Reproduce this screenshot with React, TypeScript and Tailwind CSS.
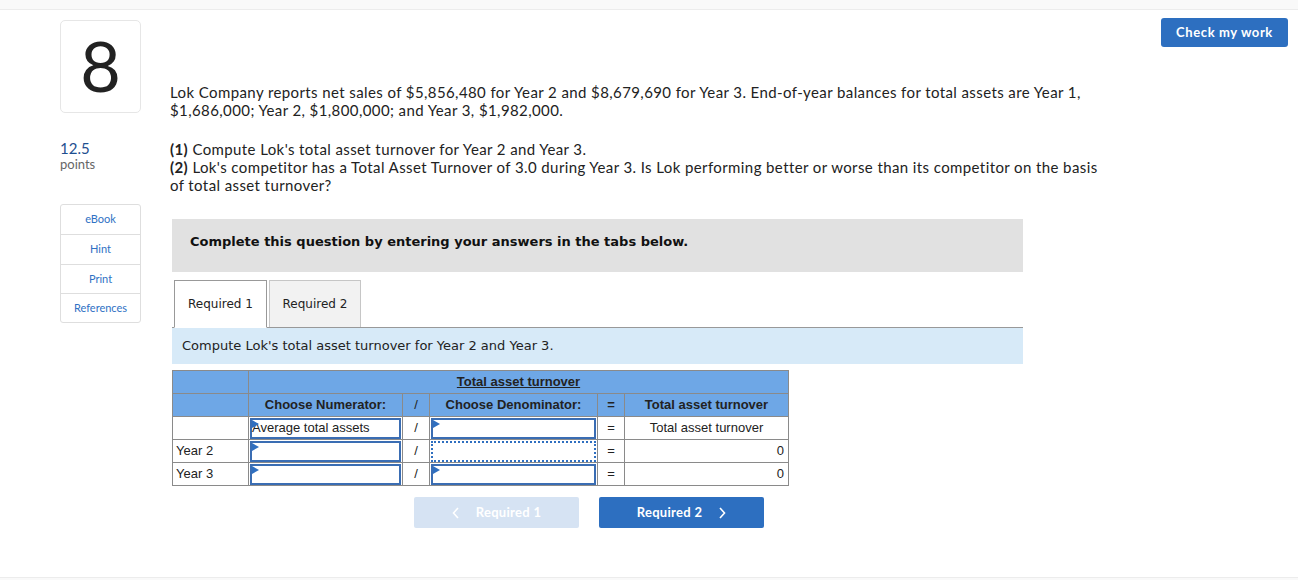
import React from "react";

const proxima = { fontFamily: "Lato, 'Open Sans', sans-serif" };
const verdana = { fontFamily: "'DejaVu Sans', Verdana, sans-serif" };
const arial = { fontFamily: "'Liberation Sans', Arial, sans-serif" };

function Flag() {
  return (
    <svg className="absolute left-0 top-0" width="7" height="8" viewBox="0 0 7 8">
      <path d="M0 0 L7 4 L0 8 Z" fill="#2f6fc0" />
    </svg>
  );
}

function InputCell({ text, dotted, flag = true }: { text?: string; dotted?: boolean; flag?: boolean }) {
  return (
    <td className="border border-[#8a8a8a] p-0">
      <div
        className={
          "relative h-[21px] mx-[1px] flex items-center text-[13px] text-[#222] " +
          (dotted ? "border-2 border-dotted border-[#2f6fc0]" : "border-2 border-[#3a6db3]")
        }
      >
        {flag && <Flag />}
        {text}
      </div>
    </td>
  );
}

export default function App() {
  return (
    <div className="w-[1298px] h-[580px] bg-white relative overflow-hidden flex flex-col" style={proxima}>
      <div className="h-[10px] bg-[#f9f9f9] border-b border-[#ececec] shrink-0" />
      <div className="flex flex-1">
        {/* Left column */}
        <div className="ml-[60px] w-[81px] shrink-0 flex flex-col">
          <div className="mt-[10px] h-[93px] w-[81px] border border-[#e6e6e6] rounded-[5px] flex items-center justify-center">
            <span className="text-[70px] leading-none text-[#222] font-normal -mt-[4px]">8</span>
          </div>
          <div className="mt-[26px] text-[15px] leading-[18px] text-[#1e4f90]">12.5</div>
          <div className="text-[13px] leading-[15px] text-[#666]">points</div>
          <div className="mt-[32px] border border-[#dedede] rounded-[3px] flex flex-col text-[11px] text-[#2f71c4]">
            <div className="h-[30px] flex items-center justify-center border-b border-[#dedede]">eBook</div>
            <div className="h-[30px] flex items-center justify-center border-b border-[#dedede]">Hint</div>
            <div className="h-[29px] flex items-center justify-center border-b border-[#dedede]">Print</div>
            <div className="h-[28px] flex items-center justify-center">References</div>
          </div>
        </div>

        {/* Main column */}
        <div className="ml-[29px] w-[853px] shrink-0 flex flex-col">
          <p className="mt-[73px] text-[15px] leading-[18px] tracking-[0.4px] text-[#222] whitespace-nowrap">
            Lok Company reports net sales of $5,856,480 for Year 2 and $8,679,690 for Year 3. End-of-year balances for total assets are Year 1,
            <br />
            $1,686,000; Year 2, $1,800,000; and Year 3, $1,982,000.
          </p>
          <p className="mt-[21px] text-[15px] leading-[18px] tracking-[0.4px] text-[#222] whitespace-nowrap">
            <b>(1)</b> Compute Lok's total asset turnover for Year 2 and Year 3.
            <br />
            <b>(2)</b> Lok's competitor has a Total Asset Turnover of 3.0 during Year 3. Is Lok performing better or worse than its competitor on the basis
            <br />
            of total asset turnover?
          </p>

          <div className="ml-[2px] w-[851px] mt-[25px] h-[53px] bg-[#e1e1e1] flex items-start pt-[15px] pl-[18px]" style={verdana}>
            <span className="text-[13px] leading-[16px] font-bold text-[#111]">Complete this question by entering your answers in the tabs below.</span>
          </div>

          {/* Tabs */}
          <div className="ml-[2px] w-[851px] mt-[8px] flex items-end border-b border-[#999] h-[48px]" style={verdana}>
            <div className="ml-[2px] w-[93px] h-[48px] -mb-[1px] bg-white border border-[#999] border-b-white flex items-center justify-center text-[12px] text-[#222]">
              Required 1
            </div>
            <div className="ml-[2px] w-[92px] h-[47px] bg-[#f2f2f2] border border-[#c6c6c6] border-b-0 flex items-center justify-center text-[12px] text-[#222]">
              Required 2
            </div>
          </div>
          <div className="ml-[2px] w-[851px] h-[36px] bg-[#d7eaf8] flex items-center pl-[10px]" style={verdana}>
            <span className="text-[13px] text-[#222]">Compute Lok's total asset turnover for Year 2 and Year 3.</span>
          </div>

          {/* Table */}
          <table className="ml-[2px] mt-[6px] w-[616px] border-collapse text-[13px] text-[#222] table-fixed" style={arial}>
            <colgroup>
              <col style={{ width: 76 }} />
              <col style={{ width: 154 }} />
              <col style={{ width: 27 }} />
              <col style={{ width: 168 }} />
              <col style={{ width: 27 }} />
              <col style={{ width: 164 }} />
            </colgroup>
            <tbody>
              <tr className="h-[23px] bg-[#6ea7e6]">
                <td className="border border-[#8a8a8a] p-0" />
                <td colSpan={5} className="border border-[#8a8a8a] p-0 text-center font-bold underline">
                  Total asset turnover
                </td>
              </tr>
              <tr className="h-[23px] bg-[#6ea7e6] font-bold">
                <td className="border border-[#8a8a8a] p-0" />
                <td className="border border-[#8a8a8a] p-0 text-center">Choose Numerator:</td>
                <td className="border border-[#8a8a8a] p-0 text-center font-normal">/</td>
                <td className="border border-[#8a8a8a] p-0 text-center">Choose Denominator:</td>
                <td className="border border-[#8a8a8a] p-0 text-center">=</td>
                <td className="border border-[#8a8a8a] p-0 text-center">Total asset turnover</td>
              </tr>
              <tr className="h-[23px]">
                <td className="border border-[#8a8a8a] p-0" />
                <InputCell text="Average total assets" />
                <td className="border border-[#8a8a8a] p-0 text-center">/</td>
                <InputCell />
                <td className="border border-[#8a8a8a] p-0 text-center">=</td>
                <td className="border border-[#8a8a8a] p-0 text-center">Total asset turnover</td>
              </tr>
              <tr className="h-[23px]">
                <td className="border border-[#8a8a8a] p-0 pl-[3px]">Year 2</td>
                <InputCell />
                <td className="border border-[#8a8a8a] p-0 text-center">/</td>
                <InputCell dotted flag={false} />
                <td className="border border-[#8a8a8a] p-0 text-center">=</td>
                <td className="border border-[#8a8a8a] p-0 text-right pr-[4px]">0</td>
              </tr>
              <tr className="h-[23px]">
                <td className="border border-[#8a8a8a] p-0 pl-[3px]">Year 3</td>
                <InputCell />
                <td className="border border-[#8a8a8a] p-0 text-center">/</td>
                <InputCell />
                <td className="border border-[#8a8a8a] p-0 text-center">=</td>
                <td className="border border-[#8a8a8a] p-0 text-right pr-[4px]">0</td>
              </tr>
            </tbody>
          </table>

          {/* Nav buttons */}
          <div className="ml-[244px] mt-[11px] flex gap-[20px]">
            <div className="w-[165px] h-[31px] rounded-[2px] bg-[#d6e3f3] flex items-center justify-center gap-[16px] text-white font-bold text-[13px] tracking-[0.3px]">
              <svg width="8" height="12" viewBox="0 0 8 12"><path d="M6 1 L1.5 6 L6 11" stroke="white" strokeWidth="1.6" fill="none" /></svg>
              <span>Required 1</span>
            </div>
            <div className="w-[165px] h-[31px] rounded-[2px] bg-[#2d6fc0] flex items-center justify-center gap-[16px] text-white font-bold text-[13px] tracking-[0.3px]">
              <span>Required 2</span>
              <svg width="8" height="12" viewBox="0 0 8 12"><path d="M2 1 L6.5 6 L2 11" stroke="white" strokeWidth="1.6" fill="none" /></svg>
            </div>
          </div>
        </div>

        <div className="ml-auto mr-[10px] mt-[8px]">
          <div className="w-[127px] h-[29px] rounded-[3px] bg-[#2d6fc0] flex items-center justify-center text-white font-bold text-[13px] tracking-[0.6px]">
            Check my work
          </div>
        </div>
      </div>
      <div className="h-[3px] bg-[#f9f9f9] border-t border-[#ececec] shrink-0" />
    </div>
  );
}
